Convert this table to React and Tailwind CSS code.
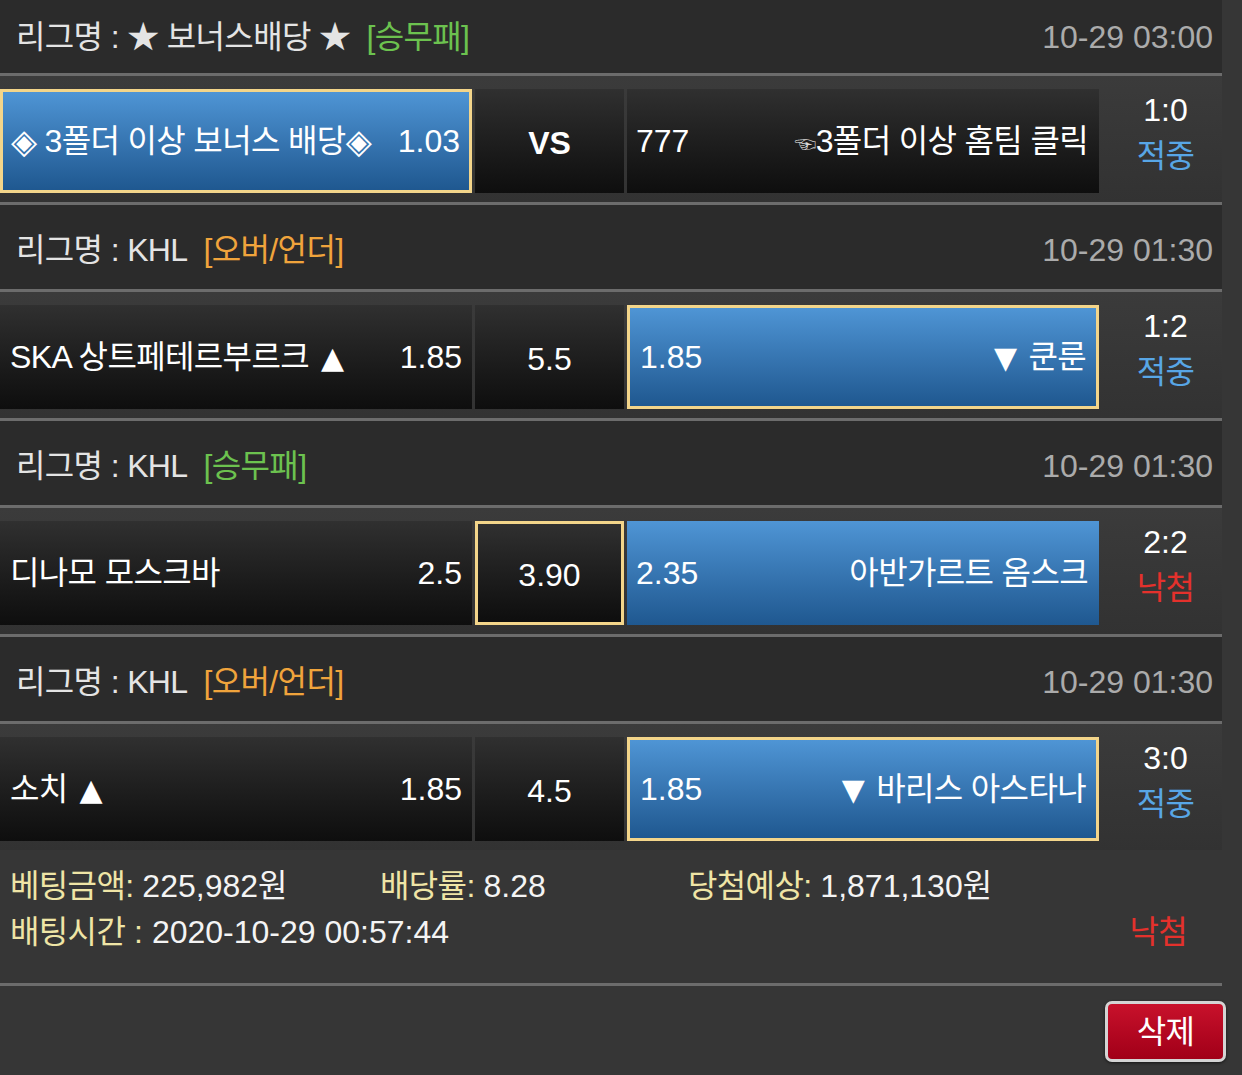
import React from "react";

const games = [
  {
    league: "★ 보너스배당 ★",
    type: "승무패",
    time: "10-29 03:00",
    home: "3폴더 이상 보너스 배당",
    diamond: true,
    homeOdds: "1.03",
    mid: "VS",
    awayOdds: "777",
    away: "3폴더 이상 홈팀 클릭",
    hand: true,
    blue: "home",
    boxed: "home",
    score: "1:0",
    result: "적중",
    first: true,
  },
  {
    league: "KHL",
    type: "오버/언더",
    time: "10-29 01:30",
    home: "SKA 상트페테르부르크",
    homeArrow: "▲",
    homeOdds: "1.85",
    mid: "5.5",
    awayOdds: "1.85",
    awayArrow: "▼",
    away: "쿤룬",
    blue: "away",
    boxed: "away",
    score: "1:2",
    result: "적중",
  },
  {
    league: "KHL",
    type: "승무패",
    time: "10-29 01:30",
    home: "디나모 모스크바",
    homeOdds: "2.5",
    mid: "3.90",
    awayOdds: "2.35",
    away: "아반가르트 옴스크",
    blue: "away",
    boxed: "mid",
    score: "2:2",
    result: "낙첨",
  },
  {
    league: "KHL",
    type: "오버/언더",
    time: "10-29 01:30",
    home: "소치",
    homeArrow: "▲",
    homeOdds: "1.85",
    mid: "4.5",
    awayOdds: "1.85",
    awayArrow: "▼",
    away: "바리스 아스타나",
    blue: "away",
    boxed: "away",
    score: "3:0",
    result: "적중",
  },
];

const ko = "tracking-[-0.02em]";
const arrow = "font-['DejaVu_Sans'] text-[30px]";
const dia = "font-['DejaVu_Sans'] text-[34px]";

// 셀 배경/테두리
function cellClass(game, slot) {
  const bg =
    game.blue === slot
      ? "bg-linear-to-b from-[#4f95d5] to-[#1f5890]"
      : "bg-linear-to-b from-[#303030] to-[#0e0e0e]";
  const border = game.boxed === slot ? "border-[3px] border-[#f3d58a]" : "";
  return `${bg} ${border} h-[104px] flex items-center`;
}

function Divider() {
  return <div className="h-[3px] w-[1222px] bg-[#6c6c6c]" />;
}

function LeagueHeader({ game }) {
  const typeColor = game.type === "승무패" ? "text-[#6cc24f]" : "text-[#f0a43c]";
  return (
    <div
      className={`${game.first ? "h-[73px]" : "h-[84px] pt-[5px]"} w-[1222px] bg-[#2b2b2b] flex items-center justify-between pl-[16px] pr-[9px]`}
    >
      <div className={`text-[#e4e4e4] ${ko}`}>
        리그명 : {game.league}
        <span className={`${typeColor} ml-[16px]`}>[{game.type}]</span>
      </div>
      <div className="text-[#ababab]">{game.time}</div>
    </div>
  );
}

function MatchRow({ game }) {
  const resultColor = game.result === "적중" ? "text-[#58a6e6]" : "text-[#e4312c]";
  return (
    <div className="w-[1222px] h-[126px] bg-linear-to-b from-[#3b3b3b] to-[#323232] pt-[13px] flex text-white">
      <div className={`${cellClass(game, "home")} w-[472px] justify-between ${game.boxed === "home" ? "pl-[8px] pr-[9px]" : "pl-[10px] pr-[10px]"}`}>
        <span className={`${ko} whitespace-nowrap flex items-center`}>
          {game.diamond && <span className={`${dia} mr-[8px]`}>◈</span>}
          {game.home}
          {game.diamond && <span className={dia}>◈</span>}
          {game.homeArrow && <span className={`${arrow} ml-[12px]`}>{game.homeArrow}</span>}
        </span>
        <span>{game.homeOdds}</span>
      </div>
      <div className={`${cellClass(game, "mid")} w-[149px] ml-[3px] justify-center pt-[3px] ${game.mid === "VS" ? "font-bold" : ""}`}>
        {game.mid}
      </div>
      <div className={`${cellClass(game, "away")} w-[472px] ml-[3px] justify-between ${game.boxed === "away" ? "pl-[10px] pr-[10px]" : "pl-[9px] pr-[11px]"}`}>
        <span>{game.awayOdds}</span>
        <span className={`${ko} whitespace-nowrap`}>
          {game.hand && <span className="text-[22px] text-[#d8d8d8]">☜</span>}
          {game.awayArrow && <span className={`${arrow} mr-[12px]`}>{game.awayArrow}</span>}
          {game.away}
        </span>
      </div>
      <div className="flex-1 h-[104px] flex flex-col items-center justify-center leading-[46px] -mt-[8px] pl-[10px]">
        <span>{game.score}</span>
        <span className={`${resultColor} ${ko}`}>{game.result}</span>
      </div>
    </div>
  );
}

export default function App() {
  return (
    <div className="w-[1242px] min-h-[1075px] bg-[#363636] text-[32px] font-['Liberation_Sans','Noto_Sans_CJK_KR','DejaVu_Sans',sans-serif]">
      {games.map((game, i) => (
        <div key={i}>
          <LeagueHeader game={game} />
          <Divider />
          <MatchRow game={game} />
          {i < games.length - 1 && <Divider />}
        </div>
      ))}

      {/* 배팅 요약 */}
      <div className="w-[1222px] pt-[13px] pb-[28px] pl-[10px] leading-[46px] text-[#f4f4f4]">
        <div className="flex">
          <span className="w-[370px]">
            <span className={`text-[#efe5a6] ${ko}`}>베팅금액:</span> 225,982
            <span className={ko}>원</span>
          </span>
          <span className="w-[308px]">
            <span className={`text-[#efe5a6] ${ko}`}>배당률:</span> 8.28
          </span>
          <span>
            <span className={`text-[#efe5a6] ${ko}`}>당첨예상:</span> 1,871,130
            <span className={ko}>원</span>
          </span>
        </div>
        <div className="flex items-center">
          <span>
            <span className={`text-[#efe5a6] ${ko}`}>배팅시간</span>
            <span className="text-[#efe5a6]"> : </span>2020-10-29 00:57:44
          </span>
          <span className={`ml-auto mr-[35px] text-[#e4312c] ${ko}`}>낙첨</span>
        </div>
      </div>
      <Divider />

      <div className="flex justify-end pr-[16px] pt-[15px]">
        <button className="w-[121px] h-[61px] rounded-[7px] border-[3px] border-[#d4d4d4] bg-linear-to-b from-[#c8112b] to-[#a10018] text-white text-[32px] tracking-[-0.02em] shadow-[0_1px_3px_rgba(0,0,0,0.6)]">
          삭제
        </button>
      </div>
    </div>
  );
}
